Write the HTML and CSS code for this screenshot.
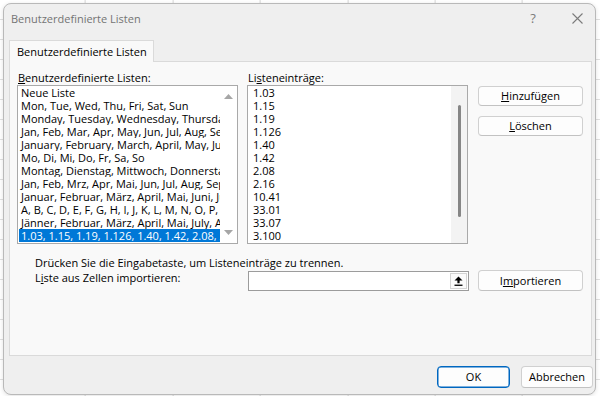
FILE: index.html
```html
<!DOCTYPE html>
<html lang="de">
<head>
<meta charset="utf-8">
<title>Benutzerdefinierte Listen</title>
<link rel="stylesheet" href="styles.css">
</head>
<body>
<div class="dialog">
  <div class="titlebar">
    <span class="title">Benutzerdefinierte Listen</span>
    <span class="help">?</span>
    <span class="close"><svg width="11" height="11" viewBox="0 0 11 11"><path d="M0.5 0.5L10.5 10.5M10.5 0.5L0.5 10.5" stroke="#7b7b7b" stroke-width="1.1" fill="none"/></svg></span>
  </div>
  <div class="tabs"><div class="tab">Benutzerdefinierte Listen</div></div>
  <div class="panel">
    <div class="top">
      <div class="col">
        <div class="label"><u>B</u>enutzerdefinierte Listen:</div>
        <div class="listbox">
          <div class="items">
            <div class="row">Neue Liste</div>
            <div class="row">Mon, Tue, Wed, Thu, Fri, Sat, Sun</div>
            <div class="row">Monday, Tuesday, Wednesday, Thursday, Friday, Saturday, Sunday</div>
            <div class="row">Jan, Feb, Mar, Apr, May, Jun, Jul, Aug, Sep, Oct, Nov, Dec</div>
            <div class="row">January, February, March, April, May, June, July, August, September</div>
            <div class="row">Mo, Di, Mi, Do, Fr, Sa, So</div>
            <div class="row">Montag, Dienstag, Mittwoch, Donnerstag, Freitag, Samstag, Sonntag</div>
            <div class="row">Jan, Feb, Mrz, Apr, Mai, Jun, Jul, Aug, Sep, Okt, Nov, Dez</div>
            <div class="row">Januar, Februar, März, April, Mai, Juni, Juli, August, September</div>
            <div class="row">A, B, C, D, E, F, G, H, I, J, K, L, M, N, O, P, Q, R, S, T</div>
            <div class="row">Jänner, Februar, März, April, Mai, July, August, September</div>
            <div class="row sel">1.03, 1.15, 1.19, 1.126, 1.40, 1.42, 2.08, 2.16, 10.41, 33.01</div>
          </div>
          <div class="vscroll classic">
            <svg width="9" height="5" viewBox="0 0 9 5"><path d="M0 5L4.5 0L9 5Z" fill="#a6a6a6"/></svg>
            <svg width="9" height="5" viewBox="0 0 9 5"><path d="M0 0L4.5 5L9 0Z" fill="#a6a6a6"/></svg>
          </div>
        </div>
      </div>
      <div class="col col-right">
        <div class="label">Li<u>s</u>teneinträge:</div>
        <div class="listbox">
          <div class="items entries">
            <div class="row">1.03</div>
            <div class="row">1.15</div>
            <div class="row">1.19</div>
            <div class="row">1.126</div>
            <div class="row">1.40</div>
            <div class="row">1.42</div>
            <div class="row">2.08</div>
            <div class="row">2.16</div>
            <div class="row">10.41</div>
            <div class="row">33.01</div>
            <div class="row">33.07</div>
            <div class="row">3.100</div>
          </div>
          <div class="vscroll modern"><div class="thumb"></div></div>
        </div>
      </div>
      <div class="side">
        <button class="btn"><u>H</u>inzufügen</button>
        <button class="btn"><u>L</u>öschen</button>
      </div>
    </div>
    <div class="hint">Drücken Sie die Eingabetaste, um Listeneinträge zu trennen.</div>
    <div class="import">
      <span class="import-label">L<u>i</u>ste aus Zellen importieren:</span>
      <div class="refedit">
        <span class="reftext"></span>
        <span class="refbtn"><svg width="9" height="10" viewBox="0 0 9 10"><path d="M4.5 0.5L8.5 4.5H5.6V7.3H3.4V4.5H0.5Z" fill="#000"/><rect x="0.5" y="8.6" width="8" height="1.3" fill="#000"/></svg></span>
      </div>
      <button class="btn imp">I<u>m</u>portieren</button>
    </div>
  </div>
  <div class="footer">
    <button class="btn ok">OK</button>
    <button class="btn cancel">Abbrechen</button>
  </div>
</div>
</body>
</html>
```
FILE: styles.css
```css
html, body {
  margin: 0;
  padding: 0;
}
body {
  width: 600px;
  height: 396px;
  overflow: hidden;
  background-color: #ffffff;
  background-image:
    repeating-linear-gradient(90deg, transparent 0 86.4px, #d6d6d6 86.4px 87.4px),
    repeating-linear-gradient(180deg, transparent 0 19px, #e0e0e0 19px 20px);
  background-position: -1.4px 0, 0 0;
  font-family: "Open Sans", "Noto Sans", "DejaVu Sans", sans-serif;
  font-size: 11px;
  color: #000;
  padding-top: 3px;
  padding-left: 3px;
  box-sizing: border-box;
}
u { text-decoration: underline; text-underline-offset: 1px; }

.dialog {
  width: 593px;
  height: 392px;
  box-sizing: border-box;
  border: 1px solid #b9b9b9;
  border-radius: 8px;
  background: #efefef;
  display: flex;
  flex-direction: column;
  box-shadow: 0 1px 4px rgba(0,0,0,0.12);
  overflow: hidden;
}

.titlebar {
  height: 28px;
  margin-bottom: 8px;
  display: flex;
  align-items: center;
  padding-left: 7px;
}
.title {
  flex: 1;
  color: #747474;
  font-size: 11px;
}
.help {
  color: #7b7b7b;
  font-size: 13px;
  width: 12px;
  text-align: center;
  margin-right: 33px;
}
.close {
  display: flex;
  width: 11px;
  height: 11px;
  margin-right: 12px;
}

.tabs {
  display: flex;
  padding-left: 5px;
  height: 21px;
}
.tab {
  box-sizing: border-box;
  width: 145px;
  height: 22px;
  border: 1px solid #dadada;
  border-bottom: none;
  background: #f9f9f9;
  padding-left: 7px;
  line-height: 21px;
  position: relative;
  z-index: 1;
}

.panel {
  box-sizing: border-box;
  margin-left: 5px;
  width: 583px;
  height: 295px;
  border: 1px solid #dadada;
  background: #f9f9f9;
  padding: 8px 7px 0 7px;
}

.top {
  display: flex;
}
.col {
  width: 221px;
  display: flex;
  flex-direction: column;
}
.col-right {
  margin-left: 9px;
}
.label {
  height: 15px;
  line-height: 15px;
  padding-left: 1px;
}
.listbox {
  box-sizing: border-box;
  height: 159px;
  border: 1px solid #a9a9a9;
  background: #ffffff;
  display: flex;
}
.items {
  flex: 1;
  min-width: 0;
  padding-left: 1px;
  overflow: hidden;
}
.row {
  height: 13px;
  line-height: 13px;
  padding-left: 2px;
  white-space: nowrap;
  overflow: hidden;
}
.row.sel {
  background: #0078d7;
  color: #ffffff;
}
.entries {
  padding-left: 3px;
}
.vscroll.classic {
  width: 17px;
  display: flex;
  flex-direction: column;
  align-items: center;
  justify-content: space-between;
  padding: 8px 0 8px;
}
.vscroll.modern {
  width: 16px;
  background: #f3f3f3;
  display: flex;
  justify-content: center;
}
.thumb {
  width: 3px;
  height: 112px;
  margin-top: 19px;
  border-radius: 2px;
  background: #868686;
}

.side {
  margin-left: 10px;
  padding-top: 16px;
  display: flex;
  flex-direction: column;
  gap: 10px;
}
.btn {
  box-sizing: border-box;
  font-family: inherit;
  font-size: 11px;
  color: #000;
  background: #fdfdfd;
  border: 1px solid #d0d0d0;
  border-bottom-color: #c2c2c2;
  border-radius: 4px;
  padding: 0;
  margin: 0;
  width: 105px;
  height: 20px;
  line-height: 18px;
  text-align: center;
}

.hint {
  margin-top: 12px;
  margin-left: 18px;
  height: 14px;
  line-height: 14px;
}
.import {
  display: flex;
  align-items: flex-start;
  margin-left: 18px;
}
.import-label {
  width: 213px;
  line-height: 15px;
}
.refedit {
  box-sizing: border-box;
  width: 221px;
  height: 20px;
  margin-top: 1px;
  border: 1px solid #9c9c9c;
  background: #fff;
  display: flex;
  justify-content: flex-end;
  align-items: center;
  padding-right: 1px;
}
.refbtn {
  box-sizing: border-box;
  width: 17px;
  height: 16px;
  border: 1px solid #d4d4d4;
  background: #fbfbfb;
  display: flex;
  align-items: center;
  justify-content: center;
}
.btn.imp {
  margin-left: 9px;
  height: 21px;
}

.footer {
  display: flex;
  justify-content: flex-end;
  gap: 11px;
  padding-top: 10px;
  padding-right: 2px;
}
.btn.ok {
  width: 73px;
  height: 22px;
  border-color: #0067c0;
  box-shadow: inset 0 0 0 0.5px #0067c0;
}
.btn.cancel {
  width: 72px;
  height: 22px;
}
```
